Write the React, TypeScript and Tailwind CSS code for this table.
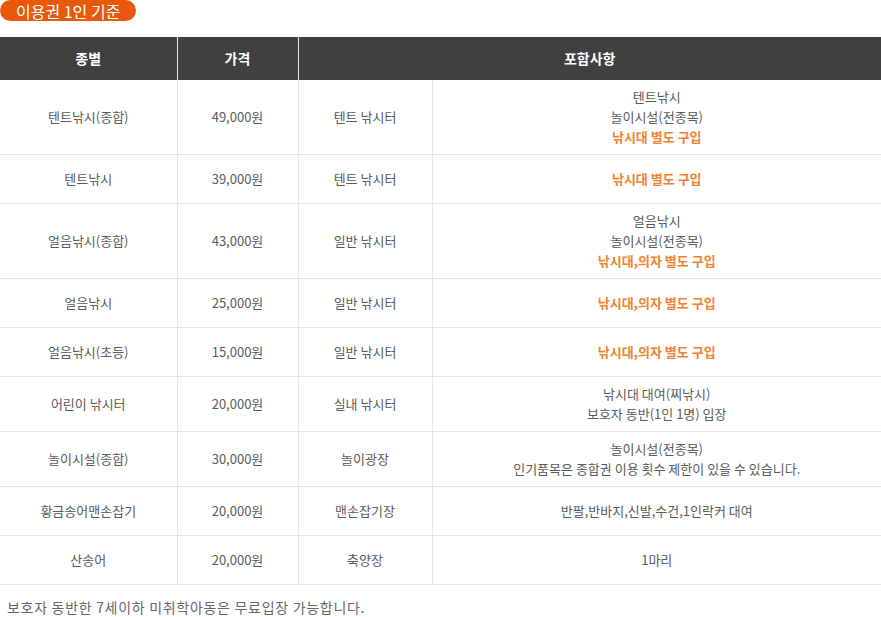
const rows: { name: string; price: string; place: string; lines: { text: string; hl?: boolean }[] }[] = [
  {
    name: "텐트낚시(종합)",
    price: "49,000원",
    place: "텐트 낚시터",
    lines: [{ text: "텐트낚시" }, { text: "놀이시설(전종목)" }, { text: "낚시대 별도 구입", hl: true }],
  },
  { name: "텐트낚시", price: "39,000원", place: "텐트 낚시터", lines: [{ text: "낚시대 별도 구입", hl: true }] },
  {
    name: "얼음낚시(종합)",
    price: "43,000원",
    place: "일반 낚시터",
    lines: [{ text: "얼음낚시" }, { text: "놀이시설(전종목)" }, { text: "낚시대,의자 별도 구입", hl: true }],
  },
  { name: "얼음낚시", price: "25,000원", place: "일반 낚시터", lines: [{ text: "낚시대,의자 별도 구입", hl: true }] },
  { name: "얼음낚시(초등)", price: "15,000원", place: "일반 낚시터", lines: [{ text: "낚시대,의자 별도 구입", hl: true }] },
  {
    name: "어린이 낚시터",
    price: "20,000원",
    place: "실내 낚시터",
    lines: [{ text: "낚시대 대여(찌낚시)" }, { text: "보호자 동반(1인 1명) 입장" }],
  },
  {
    name: "놀이시설(종합)",
    price: "30,000원",
    place: "놀이광장",
    lines: [{ text: "놀이시설(전종목)" }, { text: "인기품목은 종합권 이용 횟수 제한이 있을 수 있습니다." }],
  },
  { name: "황금송어맨손잡기", price: "20,000원", place: "맨손잡기장", lines: [{ text: "반팔,반바지,신발,수건,1인락커 대여" }] },
  { name: "산송어", price: "20,000원", place: "축양장", lines: [{ text: "1마리" }] },
];

export default function App() {
  return (
    <div className="w-[881px] h-[617px] overflow-hidden bg-white font-['Noto_Sans_CJK_KR',sans-serif] text-[13px] text-[#5a5a5a]">
      <div className="flex w-fit items-center h-[21px] px-[16px] rounded-full bg-[#e8590c] text-white text-[16px] leading-none">
        이용권 1인 기준
      </div>

      <table className="mt-[16px] w-full border-collapse table-fixed">
        <colgroup>
          <col className="w-[177px]" />
          <col className="w-[121px]" />
          <col className="w-[134px]" />
          <col />
        </colgroup>
        <thead>
          <tr className="bg-[#404040] text-white text-[14px] font-bold h-[43px]">
            <th className="border-r border-[#e5e5e5]">종별</th>
            <th className="border-r border-[#e5e5e5]">가격</th>
            <th colSpan={2}>포함사항</th>
          </tr>
        </thead>
        <tbody>
          {rows.map((r) => (
            <tr key={r.name} className="border-b border-[#e5e5e5] text-center leading-[20px]">
              <td className="h-[49px] py-[7px] border-r border-[#e5e5e5]">{r.name}</td>
              <td className="py-[7px] border-r border-[#e5e5e5]">{r.price}</td>
              <td className="py-[7px] border-r border-[#e5e5e5]">{r.place}</td>
              <td className="py-[7px]">
                {r.lines.map((l) => (
                  <div key={l.text} className={l.hl ? "text-[#f08232] font-bold" : ""}>
                    {l.text}
                  </div>
                ))}
              </td>
            </tr>
          ))}
        </tbody>
      </table>

      <p className="mt-[13px] pl-[7px] text-[14px] leading-[18px] tracking-[0.7px] text-[#666]">
        보호자 동반한 7세이하 미취학아동은 무료입장 가능합니다.
      </p>
    </div>
  );
}
